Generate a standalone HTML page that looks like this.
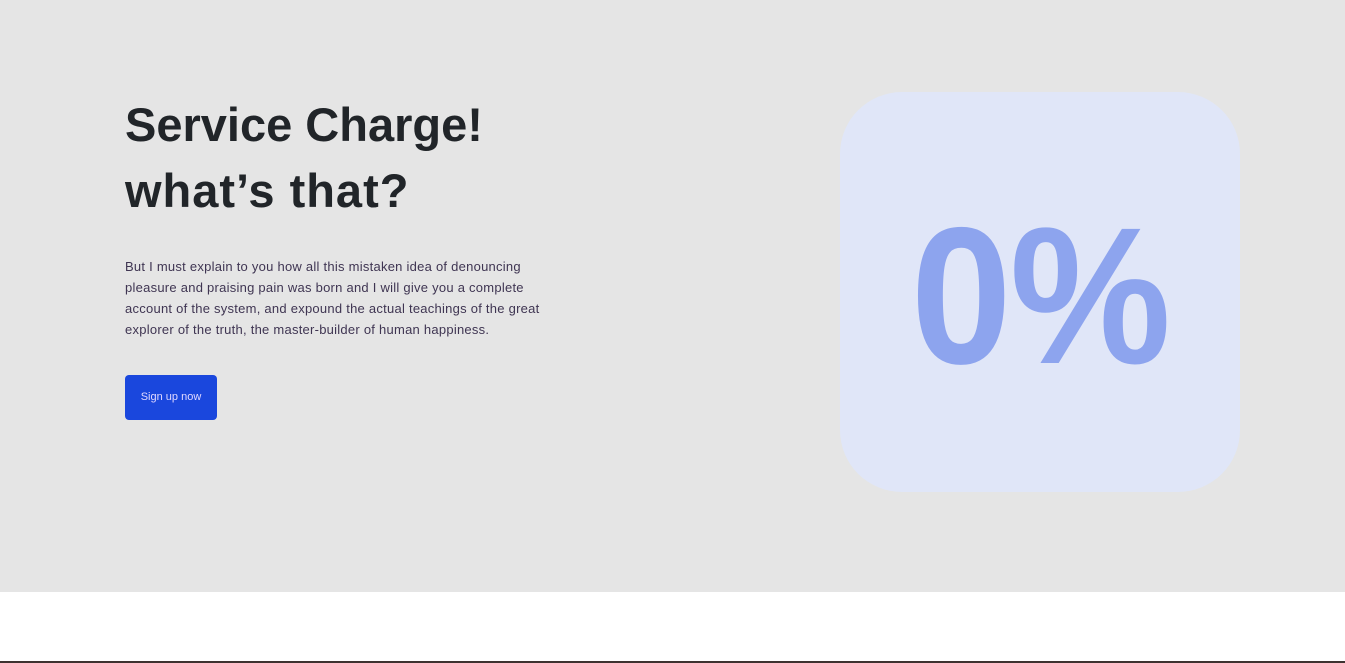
<!DOCTYPE html>
<html><head><style>
html,body{margin:0;padding:0;width:1345px;height:663px;overflow:hidden;background:#fff;font-family:"Liberation Sans",sans-serif;}
.sec{position:absolute;left:0;top:0;width:1345px;height:592px;background:#e5e5e5;}
h1{position:absolute;left:125px;top:92px;margin:0;font-size:47px;line-height:66px;font-weight:700;color:#212529;}
h1 span{letter-spacing:1px;}
p{position:absolute;left:125px;top:256px;margin:0;width:430px;font-size:13px;line-height:21px;color:#3f3552;letter-spacing:0.25px;}
.btn{position:absolute;left:125px;top:375px;width:92px;height:45px;background:#1a47dd;border-radius:4px;color:#e0d8ff;font-size:11px;line-height:45px;text-align:center;}
.card{position:absolute;left:840px;top:92px;width:400px;height:400px;border-radius:62px;background:#e0e6f8;}
.pct{position:absolute;left:0;top:107px;width:400px;text-align:center;font-size:195px;line-height:1;font-weight:700;color:#8da4ee;transform:scaleX(0.93);letter-spacing:-2px;}
.bar{position:absolute;left:0;top:661px;width:1345px;height:2px;background:#3e3230;}
</style></head><body>
<div class="sec">
<h1>Service Charge!<br><span>what’s that?</span></h1>
<p>But I must explain to you how all this mistaken idea of denouncing pleasure and praising pain was born and I will give you a complete account of the system, and expound the actual teachings of the great explorer of the truth, the master-builder of human happiness.</p>
<div class="btn">Sign up now</div>
<div class="card"><div class="pct">0%</div></div>
</div>
<div class="bar"></div>
</body></html>
